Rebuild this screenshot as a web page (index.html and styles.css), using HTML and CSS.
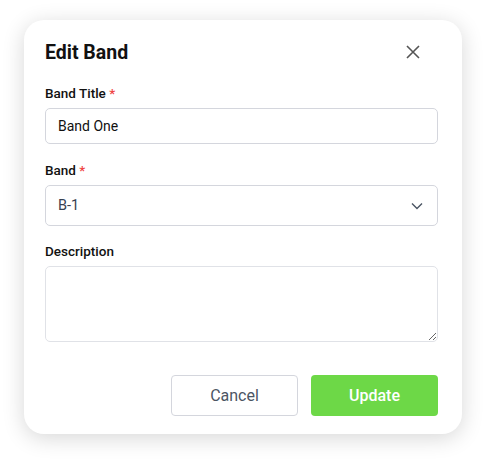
FILE: index.html
```html
<!DOCTYPE html>
<html lang="en">
<head>
    <meta charset="UTF-8">
    <meta name="viewport" content="width=device-width, initial-scale=1.0">
    <title>Edit Band</title>
    <link rel="stylesheet" href="styles.css">
</head>
<body>
    <div class="modal">
        <div class="modal-header">
            <h2>Edit Band</h2>
            <span class="close">
                <svg width="14" height="14" viewBox="0 0 14 14"><path d="M1 1L13 13M13 1L1 13" stroke="#555" stroke-width="1.6" fill="none"/></svg>
            </span>
        </div>

        <div class="field">
            <label>Band Title <span class="req">*</span></label>
            <input class="input" type="text" value="Band One">
        </div>

        <div class="field">
            <label>Band <span class="req">*</span></label>
            <div class="select">
                <span>B-1</span>
                <svg width="12" height="8" viewBox="0 0 12 8"><path d="M1 1.5L6 6.5L11 1.5" stroke="#4b5563" stroke-width="1.4" fill="none"/></svg>
            </div>
        </div>

        <div class="field">
            <label>Description</label>
            <textarea class="textarea"></textarea>
        </div>

        <div class="actions">
            <button class="btn btn-cancel">Cancel</button>
            <button class="btn btn-update">Update</button>
        </div>
    </div>
</body>
</html>
```

FILE: styles.css
```css
* {
    margin: 0;
    padding: 0;
    box-sizing: border-box;
}

body {
    background: #ffffff;
    font-family: Roboto, "Liberation Sans", sans-serif;
    color: #111827;
    padding: 20px 0 0 24px;
    min-height: 463px;
}

/* Карточка модального окна */
.modal {
    width: 438px;
    height: 414px;
    background: #ffffff;
    border-radius: 20px;
    box-shadow: 0 4px 22px rgba(0, 0, 0, 0.16);
    padding: 18px 24px 20px 21px;
}

.modal-header {
    display: flex;
    justify-content: space-between;
    align-items: center;
    height: 28px;
    margin-bottom: 17px;
}

.modal-header h2 {
    font-size: 19.5px;
    font-weight: 700;
    color: #111111;
}

.close {
    display: flex;
    margin-right: 18px;
}

.field {
    margin-bottom: 16px;
}

.field label {
    display: block;
    font-size: 13.5px;
    line-height: 20px;
    font-weight: 500;
    color: #111111;
    margin-bottom: 5px;
}

.req {
    color: #ef4444;
}

.input {
    display: block;
    width: 100%;
    height: 36px;
    border: 1px solid #d4d6dd;
    border-radius: 5px;
    padding: 0 12px;
    font-family: inherit;
    font-size: 14px;
    color: #111111;
    outline: none;
}

.select {
    display: flex;
    justify-content: space-between;
    align-items: center;
    height: 41px;
    border: 1px solid #d4d6dd;
    border-radius: 5px;
    padding: 0 14px 0 12px;
    font-size: 14.5px;
    color: #374151;
}

.field:nth-child(3) {
    margin-bottom: 15px;
}

.textarea {
    display: block;
    width: 100%;
    height: 76px;
    border: 1px solid #e0e2e7;
    border-radius: 5px;
    font-family: inherit;
    outline: none;
}

.actions {
    display: flex;
    justify-content: flex-end;
    gap: 13px;
    margin-top: 33px;
}

.btn {
    width: 127px;
    height: 41px;
    border-radius: 4px;
    font-family: inherit;
    font-size: 16px;
}

.btn-cancel {
    background: #ffffff;
    border: 1px solid #d4d6dd;
    color: #4b5563;
}

.btn-update {
    background: #6dd847;
    border: none;
    color: #ffffff;
    font-weight: 500;
}
```
